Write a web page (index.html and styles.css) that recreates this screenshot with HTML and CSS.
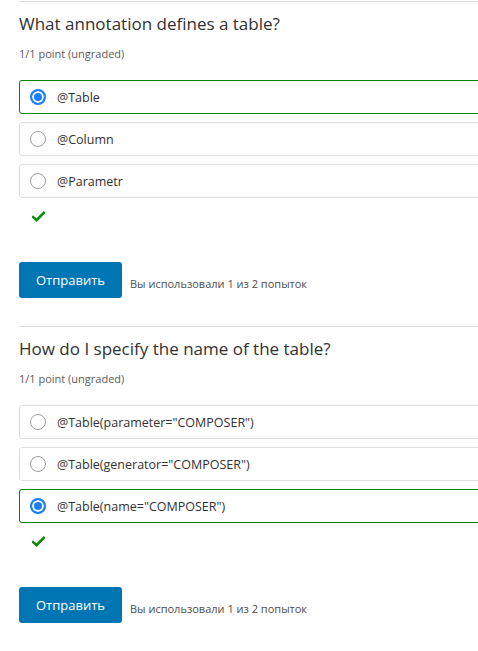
FILE: index.html
```html
<!DOCTYPE html>
<html lang="ru">
<head>
<meta charset="utf-8">
<title>Problems</title>
<link rel="stylesheet" href="styles.css">
</head>
<body>
<main class="page">
  <section class="problem">
    <h3 class="problem-title">What annotation defines a table?</h3>
    <div class="problem-meta">1/1 point (ungraded)</div>
    <div class="options">
      <label class="option option-correct"><span class="radio radio-checked"></span><span class="option-text">@Table</span></label>
      <label class="option"><span class="radio"></span><span class="option-text">@Column</span></label>
      <label class="option"><span class="radio"></span><span class="option-text">@Parametr</span></label>
    </div>
    <div class="status">
      <svg class="check" width="13" height="11" viewBox="0 0 13 11"><path d="M1.2 6.2 L4.6 9.2 L11.8 1.8" fill="none" stroke="#0c8a0c" stroke-width="2.6" stroke-linecap="square"/></svg>
    </div>
    <div class="actions">
      <button class="submit" type="button">Отправить</button>
      <span class="attempts">Вы использовали 1 из 2 попыток</span>
    </div>
  </section>
  <section class="problem">
    <h3 class="problem-title">How do I specify the name of the table?</h3>
    <div class="problem-meta">1/1 point (ungraded)</div>
    <div class="options">
      <label class="option"><span class="radio"></span><span class="option-text">@Table(parameter="COMPOSER")</span></label>
      <label class="option"><span class="radio"></span><span class="option-text">@Table(generator="COMPOSER")</span></label>
      <label class="option option-correct"><span class="radio radio-checked"></span><span class="option-text">@Table(name="COMPOSER")</span></label>
    </div>
    <div class="status">
      <svg class="check" width="13" height="11" viewBox="0 0 13 11"><path d="M1.2 6.2 L4.6 9.2 L11.8 1.8" fill="none" stroke="#0c8a0c" stroke-width="2.6" stroke-linecap="square"/></svg>
    </div>
    <div class="actions">
      <button class="submit" type="button">Отправить</button>
      <span class="attempts">Вы использовали 1 из 2 попыток</span>
    </div>
  </section>
</main>
</body>
</html>
```
FILE: styles.css
```css
html, body {
  margin: 0;
  padding: 0;
  overflow: hidden;
  background: #fff;
}

body {
  font-family: "Open Sans", "Noto Sans", sans-serif;
  color: #313131;
}

.page {
  padding: 1px 0 0 19px;
  width: 500px;
}

.problem {
  border-top: 1px solid #dddddd;
  padding-top: 10px;
  margin-bottom: 28px;
}

.problem-title {
  margin: 0;
  font-size: 17px;
  font-weight: 400;
  line-height: 24px;
  color: #313131;
}

.problem-meta {
  margin-top: 10px;
  font-size: 11px;
  line-height: 16px;
  color: #5a5a5a;
}

.options {
  margin-top: 18px;
  display: flex;
  flex-direction: column;
  gap: 8px;
}

.option {
  display: flex;
  align-items: center;
  gap: 11px;
  height: 34px;
  box-sizing: border-box;
  padding-left: 10px;
  border: 1px solid #dddddd;
  border-radius: 3px;
}

.option-correct {
  border-color: #008100;
}

.radio {
  width: 16px;
  height: 16px;
  box-sizing: border-box;
  border-radius: 50%;
  border: 1px solid #9e9e9e;
  background: #fff;
  flex: none;
}

.radio-checked {
  border: 2px solid #1a7fff;
  background: #1a7fff;
  box-shadow: inset 0 0 0 2px #fff;
}

.option-text {
  font-size: 12.5px;
  color: #313131;
}

.status {
  margin-top: 13px;
  padding-left: 13px;
  height: 12px;
}

.check {
  display: block;
}

.actions {
  margin-top: 39px;
  display: flex;
  align-items: center;
  gap: 8px;
}

.submit {
  height: 36px;
  padding: 0 17px;
  border: none;
  border-radius: 3px;
  background: #0075b4;
  color: #fff;
  font-family: inherit;
  font-size: 13px;
}

.attempts {
  font-size: 11px;
  color: #4e4e4e;
  padding-top: 6px;
}
```
